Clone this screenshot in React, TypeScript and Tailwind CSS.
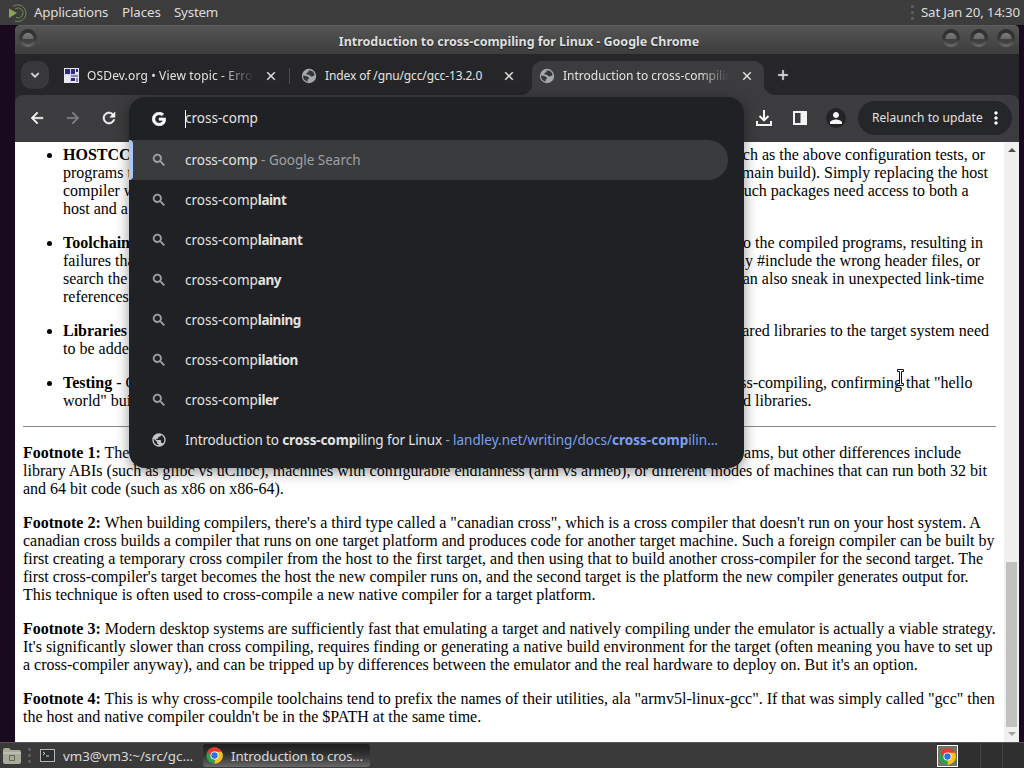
import { ReactNode } from 'react';
import { MdArrowBack, MdArrowForward, MdRefresh, MdSearch, MdPublic, MdExpandMore, MdClose, MdAdd, MdPerson, MdMoreVert } from 'react-icons/md';
import { FaGoogle } from 'react-icons/fa';

interface Line {
  start: ReactNode;
  end?: string;
  width?: string;
}

const bullets: Line[][] = [
  [
    { start: <><b>HOSTCC vs TARGETCC</b> - Many build processes require compiling things</>, end: 'to run on the host, such as the above configuration tests, or', width: 'w-[922px]' },
    { start: 'programs that generate code (such as a C program that creates a .h file', end: '#included during the main build). Simply replacing the host', width: 'w-[925px]' },
    { start: 'compiler with a target compiler breaks packages that need to build', end: 'things during the build itself. Such packages need access to both a', width: 'w-[905.5px]' },
    { start: 'host and a target compiler, and need to be taught when to use each one.' },
  ],
  [
    { start: <><b>Toolchain Leaks</b> - An improperly configured cross-compile toolchain</>, end: 'can leak bits of the host into the compiled programs, resulting in', width: 'w-[920px]' },
    { start: 'failures that are usually easy to detect but which can be difficult to', end: 'diagnose. The toolchain may #include the wrong header files, or', width: 'w-[917px]' },
    { start: 'search the wrong library paths at link time. Shared libraries often', end: 'depend on others which can also sneak in unexpected link-time', width: 'w-[921px]' },
    { start: 'references to the host system.' },
  ],
  [
    { start: <><b>Libraries</b> - Dynamically linked programs must access the appropriate</>, end: 'libraries at runtime. Adding shared libraries to the target system need', width: 'w-[926px]' },
    { start: 'to be added to the cross-compile toolchain so programs can link against them.' },
  ],
  [
    { start: <><b>Testing</b> - On native builds, the development system provides a</>, end: 'testing environment. When cross-compiling, confirming that "hello', width: 'w-[909.5px]' },
    { start: 'world" builds successfully can require configuring a', end: 'bootloader, kernel, and shared libraries.', width: 'w-[748.5px]' },
  ],
];

const footnotes: Line[][] = [
  [
    { start: <><b>Footnote 1:</b> The most prominent difference between platforms</>, end: "is the ability to run each other's programs, but other differences include", width: 'w-[938px]' },
    { start: 'library ABIs (such as glibc vs uClibc), machines with configurable endianness (arm vs armeb), or different modes of machines that can run both 32 bit' },
    { start: 'and 64 bit code (such as x86 on x86-64).' },
  ],
  [
    { start: <><b>Footnote 2:</b> When building compilers, there's a third type called a "canadian cross", which is a cross compiler that doesn't run on your host system. A</> },
    { start: 'canadian cross builds a compiler that runs on one target platform and produces code for another target machine. Such a foreign compiler can be built by' },
    { start: 'first creating a temporary cross compiler from the host to the first target, and then using that to build another cross-compiler for the second target. The' },
    { start: "first cross-compiler's target becomes the host the new compiler runs on, and the second target is the platform the new compiler generates output for." },
    { start: 'This technique is often used to cross-compile a new native compiler for a target platform.' },
  ],
  [
    { start: <><b>Footnote 3:</b> Modern desktop systems are sufficiently fast that emulating a target and natively compiling under the emulator is actually a viable strategy.</> },
    { start: "It's significantly slower than cross compiling, requires finding or generating a native build environment for the target (often meaning you have to set up" },
    { start: "a cross-compiler anyway), and can be tripped up by differences between the emulator and the real hardware to deploy on. But it's an option." },
  ],
  [
    { start: <><b>Footnote 4:</b> This is why cross-compile toolchains tend to prefix the names of their utilities, ala "armv5l-linux-gcc". If that was simply called "gcc" then</> },
    { start: "the host and native compiler couldn't be in the $PATH at the same time." },
  ],
];

const suggestions = [
  ['cross-comp', 'laint'],
  ['cross-comp', 'lainant'],
  ['cross-comp', 'any'],
  ['cross-comp', 'laining'],
  ['cross-comp', 'ilation'],
  ['cross-comp', 'iler'],
];

// Thickens an icon's glyph but not its invisible bounding path
const bold = '[&>path:last-child]:stroke-current [&>path:last-child]:stroke-[0.7]';

const Lines = ({ lines }: { lines: Line[] }) => (
  <>
    {lines.map((line, i) => (
      <div key={i} className={`flex justify-between h-[18px] whitespace-nowrap ${line.width ?? ''}`}>
        <span>{line.start}</span>
        {line.end && <span>{line.end}</span>}
      </div>
    ))}
  </>
);

const ChromeLogo = ({ className }: { className?: string }) => (
  <svg viewBox="0 0 48 48" className={className}>
    <path d="M24 24 L4.1 12.5 A23 23 0 0 1 43.9 12.5 Z" fill="#e33b2e" />
    <path d="M24 24 L43.9 12.5 A23 23 0 0 1 24 47 Z" fill="#fbc116" />
    <path d="M24 24 L24 47 A23 23 0 0 1 4.1 12.5 Z" fill="#2ba24c" />
    <path d="M24 13.5 H44.4 A23 23 0 0 0 4.1 12.5 L14.9 29.2 Z" fill="#e33b2e" />
    <path d="M24 13.5 H44.4 A23 23 0 0 1 24 47 L33.1 29.2 Z" fill="#fbc116" />
    <circle cx="24" cy="24" r="11.5" fill="#fff" />
    <circle cx="24" cy="24" r="9" fill="#2f6fe0" />
  </svg>
);

const MateLogo = () => (
  <svg viewBox="0 0 20 20" className="w-5 h-5" fill="none" stroke="#77935a">
    <path d="M1 5.500 L9 10 L1 15 Z" fill="#87a556" stroke="none" />
    <path d="M5 3.300 A8.3 8.3 0 1 1 7 18" strokeWidth="0.9" />
    <path d="M7 6 A5 5 0 1 1 8 14.5" strokeWidth="0.9" />
  </svg>
);

const WindowButton = ({ glyph }: { glyph: 'menu' | 'min' | 'max' | 'close' }) => (
  <svg viewBox="0 0 20 20" className="w-5 h-5">
    <defs>
      <linearGradient id={glyph} x1="0" y1="0" x2="0" y2="1">
        <stop offset="0" stopColor="#2c2c2c" />
        <stop offset="0.6" stopColor="#3a3a3a" />
        <stop offset="1" stopColor="#707070" />
      </linearGradient>
      <linearGradient id={`${glyph}-in`} x1="0" y1="0" x2="0" y2="1">
        <stop offset="0" stopColor="#7c7c7c" />
        <stop offset="0.6" stopColor="#666" />
        <stop offset="0.61" stopColor="#3d3d3d" />
        <stop offset="1" stopColor="#444" />
      </linearGradient>
    </defs>
    <circle cx="10" cy="10" r="9" fill={`url(#${glyph})`} />
    <circle cx="10" cy="10.3" r="5.5" fill={`url(#${glyph}-in)`} />
  </svg>
);

// Default favicon for pages without one
const GlobeFavicon = () => (
  <svg viewBox="0 0 16 16" className="w-4 h-4 shrink-0">
    <circle cx="8" cy="8" r="7.2" fill="#a4a8ac" />
    <path d="M8 2.300 L7.200 4.300 5.300 5.200 5.600 6.600 8.200 6.800 9.300 8.300 11.200 8.600 13.600 7.200 A6 6 0 0 0 8 2.300Z" fill="#35373a" />
    <path d="M2.100 7.600 L5.200 8 7.700 9.200 8 10.800 6.600 11.600 6.700 13.700 A5.900 5.900 0 0 1 2.100 7.600Z" fill="#35373a" />
  </svg>
);

const Dots = () => (
  <div className="flex flex-col gap-[3px]">
    <i className="w-[3px] h-[3px] bg-[#5a5a5a]" />
    <i className="w-[3px] h-[3px] bg-[#5a5a5a]" />
    <i className="w-[3px] h-[3px] bg-[#5a5a5a]" />
  </div>
);

const TopPanel = () => (
  <div className="h-[25px] flex items-center bg-[#3c3c3c] text-[#dcdcdc] text-[13.33px] whitespace-nowrap">
    <div className="w-[34px] pl-2"><MateLogo /></div>
    <span className="w-[88px] tracking-[-0.2px]">Applications</span>
    <span className="w-[52px] tracking-[-0.1px]">Places</span>
    <span className="tracking-[-0.2px]">System</span>
    <div className="ml-auto flex items-center gap-[7px] pr-1">
      <Dots />
      <span className="w-[99px] tracking-[-0.2px]">Sat Jan 20, 14:30</span>
    </div>
  </div>
);

const TitleBar = () => (
  <div className="h-[29px] flex items-center bg-linear-to-b from-[#555] to-[#3d3d3d] rounded-t-[5px] border-t border-[#5e5e5e] px-[3px]">
    <div className="w-[79px] mb-1"><WindowButton glyph="menu" /></div>
    <div className="flex-1 flex justify-center pt-[5px]">
      <span className="text-[12.5px] font-bold text-[#dfdfdf] whitespace-nowrap tracking-[-0.03px] [text-shadow:0_1px_1px_#222]">
        Introduction to cross-compiling for Linux - Google Chrome
      </span>
    </div>
    <div className="w-[75px] flex justify-between mb-1">
      <WindowButton glyph="min" />
      <WindowButton glyph="max" />
      <WindowButton glyph="close" />
    </div>
  </div>
);

const OsDevIcon = () => (
  <svg viewBox="0 0 15 15" className="w-[15px] h-[15px] shrink-0">
    <rect width="15" height="15" fill="#e8e8f4" />
    <path d="M1 1h5v5H1zM7 1h4v5H7zM12 1h2v3h-2zM7 10h4v3H7z" fill="#2a2a86" />
    <path d="M7 7h7v2H7zM12 10h2v4h-2z" fill="#8484b4" />
    <path d="M6.500 0v15M0 6.500h15" stroke="#d4d4e8" />
  </svg>
);

const TabStrip = () => (
  <div className="h-[41px] flex bg-[#262628] text-[#e3e3e3] text-[12px] tracking-[-0.12px] whitespace-nowrap">
    <button className="w-7 h-7 ml-1.5 mt-[7px] rounded-[10px] bg-[#38383a] flex items-center justify-center" aria-label="Search tabs">
      <MdExpandMore className={`w-4 h-4 ${bold}`} />
    </button>
    <div className="w-[241px] flex items-center pl-[15px] pt-[2px]">
      <OsDevIcon />
      <span className="w-[168px] ml-2 overflow-hidden tracking-[0.15px] [mask-image:linear-gradient(to_right,#000_80%,transparent)]">OSDev.org • View topic - Error</span>
      <MdClose className={`w-3.5 h-3.5 ml-[9px] ${bold}`} />
      <i className="w-px h-4 ml-auto bg-[#4c4c4e]" />
    </div>
    <div className="w-[241px] flex items-center pl-[11px] pt-[2px]">
      <GlobeFavicon />
      <span className="w-[169px] ml-[8px]">Index of /gnu/gcc/gcc-13.2.0</span>
      <MdClose className={`w-3.5 h-3.5 ml-2 ${bold}`} />
    </div>
    {/* Active tab */}
    <div className="relative w-[232px] mt-[7px] ml-[1px] rounded-t-[10px] bg-[#3c3b3d] flex items-center pl-[7px] pb-[5px]">
      <i className="absolute -left-2.5 bottom-0 w-2.5 h-2.5 bg-[radial-gradient(circle_at_0_0,transparent_9.5px,#3c3b3d_10px)]" />
      <i className="absolute -right-2.5 bottom-0 w-2.5 h-2.5 bg-[radial-gradient(circle_at_100%_0,transparent_9.5px,#3c3b3d_10px)]" />
      <GlobeFavicon />
      <span className="w-[166px] ml-[8px] overflow-hidden tracking-[0px] [mask-image:linear-gradient(to_right,#000_82%,transparent)]">Introduction to cross-compiling</span>
      <MdClose className={`w-3.5 h-3.5 ml-[11px] ${bold}`} />
    </div>
    <MdAdd className={`w-4 h-4 ml-[11px] mt-[13px] ${bold}`} />
  </div>
);

const Toolbar = () => (
  <div className="h-[47px] flex items-center rounded-t-[8px] bg-[#3c3b3d] text-[#f4f4f4] pl-[13px] pr-[7px] pb-px">
    <MdArrowBack className={`w-[18px] h-[18px] ${bold}`} />
    <MdArrowForward className={`w-[18px] h-[18px] ml-[18px] text-[#7e7e80] ${bold}`} />
    <MdRefresh className={`w-[18px] h-[18px] ml-[18px] ${bold}`} />
    <div className="ml-auto flex items-center">
      <svg viewBox="0 0 18 18" className="w-[18px] h-[18px]" fill="none" stroke="currentColor" strokeWidth="2">
        <path d="M9 1v10M4.500 7 L9 11.300 L13.500 7M2 12v4h14v-4" />
      </svg>
      <svg viewBox="0 0 18 18" className="w-[18px] h-[18px] ml-[18px]" fill="currentColor">
        <path fillRule="evenodd" d="M2 2h14v14H2zM4 4v10h5.500V4z" />
      </svg>
      <span className="w-5 h-5 ml-[17px] rounded-full bg-[#232426] flex items-center justify-center">
        <MdPerson className="w-[18px] h-[18px]" />
      </span>
      <button className="w-[154px] h-[34px] ml-3 rounded-full bg-[#252627] flex items-center pl-[14px] text-[12px] tracking-[0.05px] whitespace-nowrap text-[#e3e3e3]">
        <span className="w-[114px] text-left">Relaunch to update</span>
        <MdMoreVert className="w-5 h-5 text-white" />
      </button>
    </div>
  </div>
);

const Page = () => (
  <div className="h-[600px] flex bg-white overflow-hidden">
    <div className="w-[989px] pl-2 pt-[4px] font-['Liberation_Serif',serif] text-[16px] leading-[18px] text-black">
      <ul className="list-disc pl-10 flex flex-col gap-4">
        {bullets.map((lines, i) => (
          <li key={i}><Lines lines={lines} /></li>
        ))}
      </ul>
      <hr className="w-[973px] mt-4 mb-[17px] border-t border-[#8a8a8a]" />
      <div className="flex flex-col gap-4">
        {footnotes.map((lines, i) => (
          <div key={i}><Lines lines={lines} /></div>
        ))}
      </div>
    </div>
    {/* Scrollbar */}
    <div className="w-[15px] bg-[#f1f0f1] flex flex-col items-center pt-1.5 pb-1.5">
      <i className="border-x-4 border-b-4 border-x-transparent border-b-[#505050]" />
      <i className="w-[11px] h-[165px] mt-auto mb-[5px] bg-[#c1c1c1]" />
      <i className="border-x-4 border-t-4 border-x-transparent border-t-[#a3a3a3]" />
    </div>
  </div>
);

const Omnibox = () => (
  <div className="absolute left-[129px] top-[97px] w-[615px] h-[371px] rounded-2xl bg-[#202124] text-[#e3e3e3] text-[13.5px] whitespace-nowrap shadow-[0_4px_14px_rgba(0,0,0,0.42)] overflow-hidden">
    <div className="h-[43px] flex items-center pl-[23px]">
      <FaGoogle className="w-[14px] h-[14px] text-white stroke-current stroke-[24]" />
      <i className="w-px h-[18px] ml-[19px] -mr-px bg-white" />
      <span>cross-comp</span>
    </div>
    <div className="w-[599px] h-10 flex items-center rounded-r-full bg-[#3a3b3d]">
      <i className="w-1 h-10 rounded-r bg-[#a8c7fa]" />
      <MdSearch className={`w-4 h-4 ml-[18px] text-[#a8a8a8] ${bold}`} />
      <span className="ml-[18px] pt-px tracking-[-0.02px]">cross-comp<span className="text-[#9aa0a6]"> - Google Search</span></span>
    </div>
    {suggestions.map(([typed, rest]) => (
      <div key={rest} className="h-10 flex items-center pl-[22px]">
        <MdSearch className={`w-4 h-4 text-[#a8a8a8] ${bold}`} />
        <span className="ml-[18px] pt-px">{typed}<b className="tracking-[-0.45px]">{rest}</b></span>
      </div>
    ))}
    <div className="h-10 flex items-center pl-[22px]">
      <MdPublic className="w-4 h-4 text-[#c4c7c9]" />
      <span className="ml-[18px] pt-px tracking-[-0.13px]">Introduction to <b>cross-comp</b>iling for Linux<span className="text-[#9aa0a6]"> - </span><span className="text-[#7ba0ee] tracking-[0.02px]">landley.net/writing/docs/<b>cross-comp</b>ilin…</span></span>
    </div>
  </div>
);

const Taskbar = () => (
  <div className="h-[26px] flex items-center bg-[#3a3a3a] border-t border-[#555] text-[#dadada] text-[13.33px] whitespace-nowrap">
    <svg viewBox="0 0 20 18" className="w-5 h-[18px] ml-0.5">
      <path d="M1 3 Q1 1 3 1 H7 L9 3 H17 Q19 3 19 5 V15 Q19 17 17 17 H3 Q1 17 1 15 Z" fill="#a9aa99" />
      <path d="M1 6H19" stroke="#d0d1c4" />
      <path d="M7.500 8.500h5v5h-5z" fill="none" stroke="#66675c" />
    </svg>
    <div className="ml-[6px]"><Dots /></div>
    <div className="w-[164px] flex items-center pl-[9px]">
      <svg viewBox="0 0 15 13" className="w-[15px] h-[13px]">
        <rect x="0.5" y="0.5" width="14" height="12" fill="#2b2f31" stroke="#b5b5b5" />
        <path d="M3 3 L5 4.500 L3 6M6 7h3" fill="none" stroke="#d8d8d8" />
      </svg>
      <span className="ml-2 pt-[2px]">vm3@vm3:~/src/gc…</span>
    </div>
    <div className="w-[167px] h-[23px] ml-[8px] flex items-center pl-[3px] rounded-[3px] bg-linear-to-b from-[#1e1e1e] via-[#343434] to-[#686868]">
      <ChromeLogo className="w-[17px] h-[17px]" />
      <span className="ml-2 pt-[2px] tracking-[-0.13px]">Introduction to cros…</span>
    </div>
    <div className="w-[87px] h-full ml-auto flex bg-[#2f2f30]">
      <div className="w-[21px] h-[22px] mt-[2px] border border-white bg-[#6f7568] flex items-center justify-center">
        <ChromeLogo className="w-[17px] h-[17px]" />
      </div>
      <i className="w-px h-full ml-[22px] bg-[#444]" />
      <i className="w-px h-full ml-[21px] bg-[#444]" />
    </div>
  </div>
);

export default function App() {
  return (
    <div className="relative w-[1024px] h-[768px] overflow-hidden flex flex-col bg-[#190a1d] font-['Noto_Sans',sans-serif]">
      <TopPanel />
      <div className="w-[1004px] ml-[15px]">
        <TitleBar />
        <div className="bg-[#262628]">
          <TabStrip />
          <Toolbar />
        </div>
        <Page />
      </div>
      <Taskbar />
      <Omnibox />
      {/* Mouse cursor */}
      <svg viewBox="0 0 9 18" className="absolute left-[896px] top-[369px] w-[9px] h-[18px]" fill="#fff" stroke="#111">
        <path d="M1.500 0.500h6v2h-2v12h2v2h-6v-2h2v-12h-2z" />
      </svg>
    </div>
  );
}
